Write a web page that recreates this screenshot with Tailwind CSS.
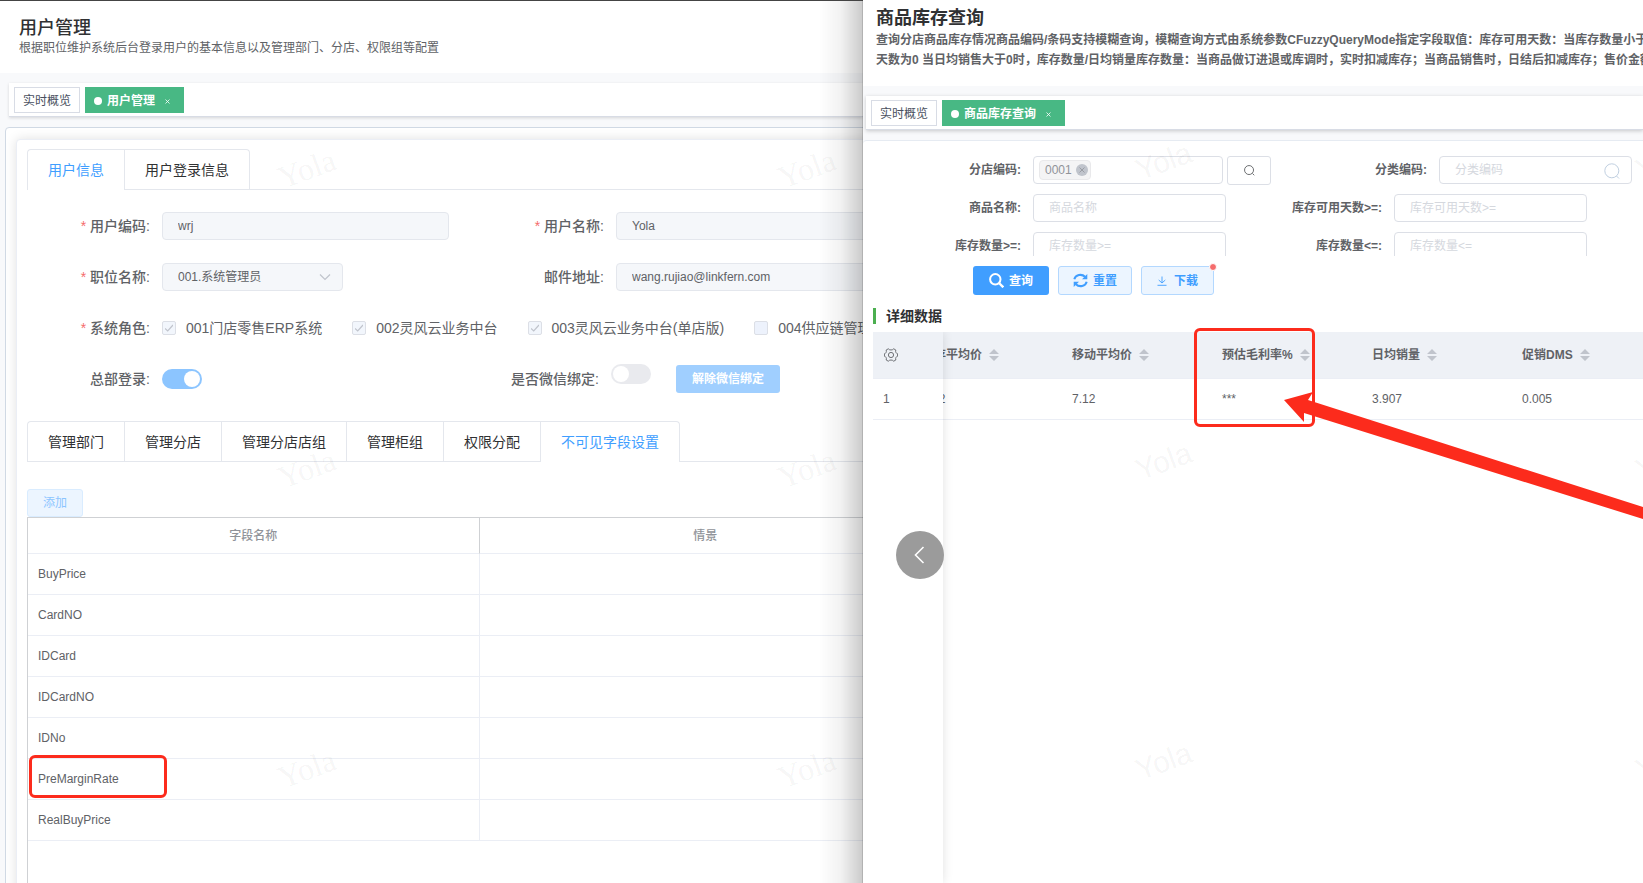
<!DOCTYPE html>
<html lang="zh-CN">
<head>
  <meta charset="UTF-8" />
  <meta name="viewport" content="width=device-width, initial-scale=1.0"/>
  <title>用户管理 / 商品库存查询</title>
  <script src="https://cdn.jsdelivr.net/npm/@tailwindcss/browser@4"></script>
</head>
<body class="h-screen overflow-hidden bg-white font-['Liberation_Sans','Noto_Sans_CJK_SC',sans-serif] text-xs text-[#606266]">
<div class="grid h-full grid-cols-[minmax(0,863fr)_minmax(0,780fr)]">

  <!-- user management window -->
  <section class="relative flex min-w-0 flex-col overflow-hidden border-t border-[#444] bg-[#f8f9fb]">
    <header class="h-[72px] shrink-0 bg-white px-[19px] pt-[15px]">
      <h1 class="text-lg leading-6 font-medium text-[#303133]">用户管理</h1>
      <p class="text-xs leading-4 whitespace-nowrap text-[#606266]">根据职位维护系统后台登录用户的基本信息以及管理部门、分店、权限组等配置</p>
    </header>
    <nav class="mt-2.5 ml-[9px] flex h-[34px] shrink-0 gap-[5px] border-b border-[#d8dce5] bg-white px-[5px] pt-1 shadow-[0_1px_3px_rgba(0,0,0,0.14)]">
      <a href="#" class="flex h-[26px] items-center border border-[#d8dce5] px-2 pt-0.5 text-[#495060]">实时概览</a>
      <a href="#" class="flex h-[26px] items-center bg-[#48b884] pt-0.5 pr-3.5 pl-[9px] font-bold text-white"><span class="mr-[5px] size-2 rounded-full bg-white"></span>用户管理<svg class="ml-2.5 size-[5px]" viewBox="0 0 5 5" stroke="currentColor" stroke-width="0.8"><path d="M.5.5l4 4M4.5.5l-4 4"/></svg></a>
    </nav>

    <main class="mt-2.5 ml-[5px] w-[110%] flex-1 rounded-tl border border-[#d0d9e4] bg-white pt-[11px] pl-2.5">
      <div class="h-full rounded-tl border border-[#ebeef5] bg-white pt-[9px] pl-2.5 shadow-[0_0_12px_rgba(0,0,0,0.12)]">
        <div role="tablist" class="flex h-[41px] border-b border-[#e4e7ed] text-sm text-[#303133]">
          <button class="h-[41px] rounded-tl border-t border-l border-[#e4e7ed] bg-white px-5 text-[#409eff]">用户信息</button>
          <button class="h-10 rounded-tr border-t border-r border-l border-[#e4e7ed] px-5">用户登录信息</button>
        </div>

        <form class="flex flex-col gap-[23px] pt-[22px]">
          <div class="flex h-7 items-center">
            <label for="code" class="w-[135px] shrink-0 pr-3 text-right text-sm font-medium"><span class="mr-1 text-[#f56c6c]">*</span>用户编码:</label>
            <input id="code" disabled value="wrj" class="h-7 w-[287px] rounded border border-[#e4e7ed] bg-[#f5f7fa] px-[15px] text-xs"/>
            <label for="name" class="w-[167px] shrink-0 pr-3 text-right text-sm font-medium"><span class="mr-1 text-[#f56c6c]">*</span>用户名称:</label>
            <input id="name" disabled value="Yola" class="h-7 w-[287px] rounded border border-[#e4e7ed] bg-[#f5f7fa] px-[15px] text-xs"/>
          </div>
          <div class="flex h-7 items-center">
            <label for="job" class="w-[135px] shrink-0 pr-3 text-right text-sm font-medium"><span class="mr-1 text-[#f56c6c]">*</span>职位名称:</label>
            <div class="relative mr-[106px] w-[181px]">
              <select id="job" disabled class="h-7 w-full appearance-none rounded border border-[#e4e7ed] bg-[#f5f7fa] px-[15px] text-xs opacity-100"><option>001.系统管理员</option></select>
              <svg class="absolute top-2.5 right-3 h-2 w-3" viewBox="0 0 12 8" fill="none" stroke="#c0c4cc" stroke-width="1.2"><path d="M1 1.5l5 5 5-5"/></svg>
            </div>
            <label for="mail" class="w-[167px] shrink-0 pr-3 text-right text-sm font-medium">邮件地址:</label>
            <input id="mail" disabled value="wang.rujiao@linkfern.com" class="h-7 w-[287px] rounded border border-[#e4e7ed] bg-[#f5f7fa] px-[15px] text-xs"/>
          </div>
          <div class="flex h-7 items-center text-sm whitespace-nowrap">
            <span class="w-[135px] shrink-0 pr-3 text-right font-medium"><span class="mr-1 text-[#f56c6c]">*</span>系统角色:</span>
            <div class="flex gap-[30px]">
              <label class="relative flex items-center gap-2.5"><input type="checkbox" checked disabled class="size-3.5 appearance-none rounded-xs border border-[#dcdfe6] bg-[#f2f6fc]"/><svg class="absolute left-[3px] size-2" viewBox="0 0 8 8" fill="none" stroke="#c0c4cc" stroke-width="1.2"><path d="M0 4.5l2.7 2.5L8 1"/></svg>001门店零售ERP系统</label>
              <label class="relative flex items-center gap-2.5"><input type="checkbox" checked disabled class="size-3.5 appearance-none rounded-xs border border-[#dcdfe6] bg-[#f2f6fc]"/><svg class="absolute left-[3px] size-2" viewBox="0 0 8 8" fill="none" stroke="#c0c4cc" stroke-width="1.2"><path d="M0 4.5l2.7 2.5L8 1"/></svg>002灵风云业务中台</label>
              <label class="relative flex items-center gap-2.5"><input type="checkbox" checked disabled class="size-3.5 appearance-none rounded-xs border border-[#dcdfe6] bg-[#f2f6fc]"/><svg class="absolute left-[3px] size-2" viewBox="0 0 8 8" fill="none" stroke="#c0c4cc" stroke-width="1.2"><path d="M0 4.5l2.7 2.5L8 1"/></svg>003灵风云业务中台(单店版)</label>
              <label class="flex items-center gap-2.5"><input type="checkbox" disabled class="size-3.5 appearance-none rounded-xs border border-[#dcdfe6] bg-[#edf2fc]"/>004供应链管理</label>
            </div>
          </div>
          <div class="flex h-7 items-center">
            <label for="hq" class="w-[135px] shrink-0 pr-3 text-right text-sm font-medium">总部登录:</label>
            <input id="hq" type="checkbox" role="switch" checked disabled class="h-5 w-10 appearance-none rounded-full bg-[#8cc5ff] before:mt-0.5 before:ml-[22px] before:block before:size-4 before:rounded-full before:bg-white"/>
            <label for="wx" class="w-[409px] shrink-0 pr-3 text-right text-sm font-medium">是否微信绑定:</label>
            <input id="wx" type="checkbox" role="switch" disabled class="mb-2.5 h-5 w-10 appearance-none rounded-full bg-[#e9eaee] before:mt-0.5 before:ml-0.5 before:block before:size-4 before:rounded-full before:bg-white"/>
            <button type="button" disabled class="ml-[25px] h-7 rounded-[3px] bg-[#a0cfff] px-4 text-xs font-bold text-white">解除微信绑定</button>
          </div>
        </form>

        <div role="tablist" class="mt-7 flex h-[41px] border-b border-[#e4e7ed] text-sm whitespace-nowrap text-[#303133]">
          <button class="h-10 rounded-tl border-t border-l border-[#e4e7ed] px-5">管理部门</button>
          <button class="h-10 border-t border-l border-[#e4e7ed] px-5">管理分店</button>
          <button class="h-10 border-t border-l border-[#e4e7ed] px-5">管理分店店组</button>
          <button class="h-10 border-t border-l border-[#e4e7ed] px-5">管理柜组</button>
          <button class="h-10 border-t border-l border-[#e4e7ed] px-5">权限分配</button>
          <button class="h-[41px] rounded-tr border-t border-r border-l border-[#e4e7ed] bg-white px-5 text-[#409eff]">不可见字段设置</button>
        </div>

        <button disabled class="mt-[27px] block h-7 rounded-[3px] border border-[#d9ecff] bg-[#ecf5ff] px-[15px] text-xs text-[#8cc5ff]">添加</button>
        <div class="h-[400px] border-t border-l border-[#cfd1d4]">
          <table class="w-[903px] table-fixed border-separate border-spacing-0">
            <thead>
              <tr class="h-9 text-[#909399]">
                <th class="border-r border-b border-r-[#cfd1d4] border-b-[#ebeef5] font-medium">字段名称</th>
                <th class="border-b border-[#ebeef5] font-medium">情景</th>
              </tr>
            </thead>
            <tbody>
              <tr class="h-[41px]"><td class="border-r border-b border-[#ebeef5] px-2.5">BuyPrice</td><td class="border-b border-[#ebeef5]"></td></tr>
              <tr class="h-[41px]"><td class="border-r border-b border-[#ebeef5] px-2.5">CardNO</td><td class="border-b border-[#ebeef5]"></td></tr>
              <tr class="h-[41px]"><td class="border-r border-b border-[#ebeef5] px-2.5">IDCard</td><td class="border-b border-[#ebeef5]"></td></tr>
              <tr class="h-[41px]"><td class="border-r border-b border-[#ebeef5] px-2.5">IDCardNO</td><td class="border-b border-[#ebeef5]"></td></tr>
              <tr class="h-[41px]"><td class="border-r border-b border-[#ebeef5] px-2.5">IDNo</td><td class="border-b border-[#ebeef5]"></td></tr>
              <tr class="h-[41px]"><td class="relative border-r border-b border-[#ebeef5] px-2.5">PreMarginRate<span class="absolute -top-1 left-px h-[43px] w-[138px] rounded-md border-3 border-[#fc2b1c]"></span></td><td class="border-b border-[#ebeef5]"></td></tr>
              <tr class="h-[41px]"><td class="border-r border-b border-[#ebeef5] px-2.5">RealBuyPrice</td><td class="border-b border-[#ebeef5]"></td></tr>
            </tbody>
          </table>
        </div>
      </div>
    </main>

    <!-- watermark -->
    <div aria-hidden="true" class="pointer-events-none absolute top-[147px] left-[277px] grid grid-cols-[500px_500px] auto-rows-[300px] font-['Liberation_Serif',serif] text-[32px] leading-10 text-black/5">
      <span class="h-10 w-[62px] -rotate-20">Yola</span><span class="h-10 w-[62px] -rotate-20">Yola</span>
      <span class="h-10 w-[62px] -rotate-20">Yola</span><span class="h-10 w-[62px] -rotate-20">Yola</span>
      <span class="h-10 w-[62px] -rotate-20">Yola</span><span class="h-10 w-[62px] -rotate-20">Yola</span>
    </div>
    <!-- shade cast by the front window -->
    <div class="pointer-events-none absolute inset-y-0 right-0 w-11 border-r border-black/30 bg-linear-to-r from-transparent via-black/5 to-black/20"></div>
  </section>

  <!-- stock query window -->
  <section class="relative flex min-w-0 flex-col overflow-hidden bg-[#f8f9fb]">
    <header class="h-[86px] shrink-0 bg-white pt-1.5 pl-[13px] whitespace-nowrap">
      <h1 class="text-lg leading-6 font-bold text-[#303133]">商品库存查询</h1>
      <p class="text-xs leading-5 font-bold text-[#606266]">查询分店商品库存情况商品编码/条码支持模糊查询，模糊查询方式由系统参数CFuzzyQueryMode指定字段取值：库存可用天数：当库存数量小于<br/>天数为0 当日均销售大于0时，库存数量/日均销量库存数量：当商品做订进退或库调时，实时扣减库存；当商品销售时，日结后扣减库存；售价金额</p>
    </header>
    <nav class="mt-2.5 ml-[3px] flex h-[34px] shrink-0 gap-[5px] border-b border-[#d8dce5] bg-white px-[5px] pt-1 shadow-[0_1px_4px_rgba(0,0,0,0.2)]">
      <a href="#" class="flex h-[26px] items-center border border-[#d8dce5] px-2 pt-0.5 text-[#495060]">实时概览</a>
      <a href="#" class="flex h-[26px] items-center bg-[#48b884] pt-0.5 pr-3.5 pl-[9px] font-bold text-white"><span class="mr-[5px] size-2 rounded-full bg-white"></span>商品库存查询<svg class="ml-2.5 size-[5px]" viewBox="0 0 5 5" stroke="currentColor" stroke-width="0.8"><path d="M.5.5l4 4M4.5.5l-4 4"/></svg></a>
    </nav>

    <main class="mt-2.5 flex min-h-0 flex-1 flex-col rounded-tl border-t border-[#e6ebf2] bg-white">
      <form class="flex h-[115px] shrink-0 flex-col gap-2.5 overflow-hidden pt-[15px] pl-0.5 whitespace-nowrap">
        <div class="flex h-7 shrink-0 items-center">
          <label for="store" class="w-[156px] shrink-0 text-right font-bold">分店编码:</label>
          <div class="ml-3 flex h-7 w-[190px] shrink-0 items-center rounded border border-[#dcdfe6] pl-[5px]">
            <span class="flex h-5 items-center gap-1 rounded border border-[#e9e9eb] bg-[#f4f4f5] pr-0.5 pl-[5px] text-[#909399]">0001<button type="button" aria-label="移除" class="grid size-3 place-items-center rounded-full bg-[#c0c4cc]"><svg class="size-1.5" viewBox="0 0 6 6" stroke="#909399" stroke-width="0.8"><path d="M.5.5l5 5M5.5.5l-5 5"/></svg></button></span>
            <input id="store" class="h-6 w-24 outline-none"/>
          </div>
          <button type="button" aria-label="选择分店" class="ml-1 grid h-[29px] w-11 shrink-0 place-items-center rounded-[3px] border border-[#dcdfe6]"><svg class="size-[11px]" viewBox="0 0 12 12" fill="none" stroke="#606266"><circle cx="5.5" cy="5.5" r="4.9"/><path d="M9.2 9.2l2 2"/></svg></button>
          <label for="cat" class="w-[156px] shrink-0 text-right font-bold">分类编码:</label>
          <div class="relative ml-3 w-[193px] shrink-0">
            <input id="cat" placeholder="分类编码" class="block h-7 w-full rounded border border-[#dcdfe6] px-[15px] placeholder:text-[#d5d8de]"/>
            <svg class="absolute top-[7px] right-3 size-4" viewBox="0 0 16 16" fill="none" stroke="#c0cfe0"><circle cx="7.8" cy="7.8" r="7"/><path d="M12.5 13l2.5 2.5"/></svg>
          </div>
        </div>
        <div class="flex h-7 shrink-0 items-center">
          <label for="goods" class="w-[156px] shrink-0 text-right font-bold">商品名称:</label>
          <input id="goods" placeholder="商品名称" class="ml-3 h-7 w-[193px] shrink-0 rounded border border-[#dcdfe6] px-[15px] placeholder:text-[#d5d8de]"/>
          <label for="days" class="w-[156px] shrink-0 text-right font-bold">库存可用天数&gt;=:</label>
          <input id="days" placeholder="库存可用天数&gt;=" class="ml-3 h-7 w-[193px] shrink-0 rounded border border-[#dcdfe6] px-[15px] placeholder:text-[#d5d8de]"/>
        </div>
        <div class="flex h-7 shrink-0 items-center">
          <label for="min" class="w-[156px] shrink-0 text-right font-bold">库存数量&gt;=:</label>
          <input id="min" placeholder="库存数量&gt;=" class="ml-3 h-7 w-[193px] shrink-0 rounded border border-[#dcdfe6] px-[15px] placeholder:text-[#d5d8de]"/>
          <label for="max" class="w-[156px] shrink-0 text-right font-bold">库存数量&lt;=:</label>
          <input id="max" placeholder="库存数量&lt;=" class="ml-3 h-7 w-[193px] shrink-0 rounded border border-[#dcdfe6] px-[15px] placeholder:text-[#d5d8de]"/>
        </div>
      </form>

      <div class="mt-2.5 flex shrink-0 gap-[9px] pl-[110px] font-bold">
        <button class="flex h-[29px] w-[76px] items-center justify-center gap-[5px] rounded-[3px] bg-[#409eff] text-white"><svg class="size-[15px]" viewBox="0 0 15 15" fill="none" stroke="currentColor" stroke-width="2"><circle cx="6.3" cy="6.3" r="5.2"/><path d="M10 10l4.3 4.3" stroke-width="2.4"/></svg>查询</button>
        <button class="flex h-[29px] w-[74px] items-center justify-center gap-[5px] rounded-[3px] border border-[#b3d8ff] bg-[#ecf5ff] text-[#409eff]"><svg class="size-[15px]" viewBox="0 0 15 15" fill="none" stroke="currentColor" stroke-width="2"><path d="M1.3 6.3A6.2 5.6 0 0 1 12 3.8M13.7 8.7A6.2 5.6 0 0 1 3 11.2"/><path d="M14.3 1v5.2H9zM.7 14V8.8H6z" fill="currentColor" stroke="none"/></svg>重置</button>
        <button class="relative flex h-[29px] w-[73px] items-center justify-center gap-[7px] rounded-[3px] border border-[#b3d8ff] bg-[#ecf5ff] text-[#409eff]"><svg class="size-2.5" viewBox="0 0 10 10" fill="none" stroke="currentColor" stroke-width="0.9"><path d="M5 .5v6.3M1.7 4L5 7l3.3-3M.5 9.3h9"/></svg>下载<span class="absolute -top-1 -right-1 size-2 rounded-full border border-white bg-[#f56c6c]"></span></button>
      </div>

      <h2 class="mt-[13px] ml-2.5 h-4 shrink-0 border-l-3 border-[#4caf50] pl-2.5 text-sm leading-4 font-bold text-[#303133]">详细数据</h2>

      <div class="relative mt-2 ml-2.5 flex min-h-0 flex-1">
        <div class="z-10 w-[70px] shrink-0 bg-white shadow-[0_0_10px_rgba(0,0,0,0.12)] [clip-path:inset(0_-12px_0_0)]">
          <table class="w-full border-separate border-spacing-0">
            <thead><tr class="h-[47px]"><th class="border-b border-[#ebeef5] bg-[#eef1f6] pl-[11px] text-left"><svg class="size-3.5" viewBox="0 0 14 14" fill="none" stroke="#606266" stroke-width="0.9" stroke-linejoin="round"><path d="M4.3.8Q5.3 2 7 2T9.700.8L11.800 2Q11.300 3.500 12 4.600T13.600 5.800V8.200Q12.600 8.400 12 9.400T11.800 12L9.700 13.200Q8.700 12 7 12T4.300 13.200L2.200 12Q2.700 10.500 2 9.400T.4 8.200V5.800Q1.400 5.600 2 4.600T2.200 2Z"/><circle cx="7" cy="7" r="2.600"/></svg></th></tr></thead>
            <tbody><tr class="h-[41px]"><td class="border-b border-[#ebeef5] pl-2.5">1</td></tr></tbody>
          </table>
        </div>
        <div class="min-w-0 flex-1 overflow-hidden">
          <table class="-ml-[31px] w-[750px] table-fixed border-separate border-spacing-0">
            <thead>
              <tr class="h-[47px] text-left whitespace-nowrap">
                <th class="border-b border-[#ebeef5] bg-[#eef1f6] px-2.5"><span class="flex items-center gap-[7px]">库存平均价<svg class="h-3 w-2.5" viewBox="0 0 10 12" fill="#c0c4cc"><path d="M5 0l5 5H0zM5 12l5-5H0z"/></svg></span></th>
                <th class="border-b border-[#ebeef5] bg-[#eef1f6] px-2.5"><span class="flex items-center gap-[7px]">移动平均价<svg class="h-3 w-2.5" viewBox="0 0 10 12" fill="#c0c4cc"><path d="M5 0l5 5H0zM5 12l5-5H0z"/></svg></span></th>
                <th class="border-b border-[#ebeef5] bg-[#eef1f6] px-2.5"><span class="flex items-center gap-[7px]">预估毛利率%<svg class="h-3 w-2.5" viewBox="0 0 10 12" fill="#c0c4cc"><path d="M5 0l5 5H0zM5 12l5-5H0z"/></svg></span></th>
                <th class="border-b border-[#ebeef5] bg-[#eef1f6] px-2.5"><span class="flex items-center gap-[7px]">日均销量<svg class="h-3 w-2.5" viewBox="0 0 10 12" fill="#c0c4cc"><path d="M5 0l5 5H0zM5 12l5-5H0z"/></svg></span></th>
                <th class="border-b border-[#ebeef5] bg-[#eef1f6] px-2.5"><span class="flex items-center gap-[7px]">促销DMS<svg class="h-3 w-2.5" viewBox="0 0 10 12" fill="#c0c4cc"><path d="M5 0l5 5H0zM5 12l5-5H0z"/></svg></span></th>
              </tr>
            </thead>
            <tbody>
              <tr class="h-[41px]">
                <td class="border-b border-[#ebeef5] px-2.5">7.12</td>
                <td class="border-b border-[#ebeef5] px-2.5">7.12</td>
                <td class="border-b border-[#ebeef5] px-2.5">***</td>
                <td class="border-b border-[#ebeef5] px-2.5">3.907</td>
                <td class="border-b border-[#ebeef5] px-2.5">0.005</td>
              </tr>
            </tbody>
          </table>
        </div>
        <span class="pointer-events-none absolute -top-1 left-[321px] z-20 h-[99px] w-[121px] rounded-md border-3 border-[#fc2b1c]"></span>
      </div>
    </main>

    <div aria-hidden="true" class="pointer-events-none absolute top-[141px] left-[272px] grid grid-cols-[500px_500px] auto-rows-[300px] text-[30px] leading-10 text-black/5">
      <span class="h-10 w-[60px] -rotate-20">Yola</span><span class="h-10 w-[60px] -rotate-20">Yola</span>
      <span class="h-10 w-[60px] -rotate-20">Yola</span><span class="h-10 w-[60px] -rotate-20">Yola</span>
      <span class="h-10 w-[60px] -rotate-20">Yola</span><span class="h-10 w-[60px] -rotate-20">Yola</span>
    </div>
    <button aria-label="上一张" class="absolute top-[531px] left-[33px] z-20 grid size-12 place-items-center rounded-full bg-[#9b9b9b]"><svg class="h-[18px] w-3" viewBox="0 0 12 18" fill="none" stroke="#fff" stroke-width="1.6"><path d="M9.500 1L1.500 9l8 8"/></svg></button>
    <svg class="pointer-events-none absolute top-[392px] left-[421px] z-20 h-[128px] w-[359px]" viewBox="0 0 359 128" fill="#fc2b1c"><path d="M0 8L29 0l-5 8 335 107v12L20 21v9z"/></svg>
  </section>
</div>
</body>
</html>
